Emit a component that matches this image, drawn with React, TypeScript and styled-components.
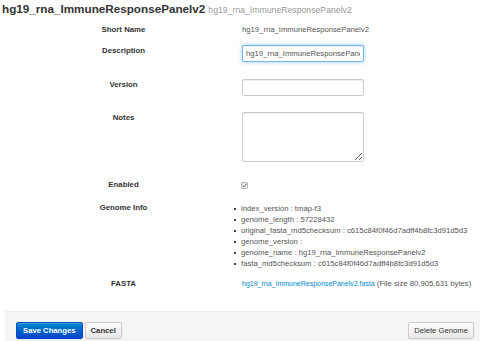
import styled, { createGlobalStyle } from 'styled-components';

const GlobalStyle = createGlobalStyle`
  body {
    margin: 0;
    background: #fff;
    font-family: "Liberation Sans", Arial, sans-serif;
    color: #333;
  }
`;

const Page = styled.div`
  width: 480px;
  height: 341px;
  overflow: hidden;
`;

const Title = styled.h1`
  margin: 0;
  padding: 2px 0 0 2px;
  font-size: 11.7px;
  line-height: 14px;
  font-weight: bold;
  color: #333;
  white-space: nowrap;
`;

const SubTitle = styled.small`
  margin-left: 3px;
  font-size: 8.7px;
  font-weight: normal;
  color: #999;
`;

const Row = styled.div<{ $top: number }>`
  display: grid;
  grid-template-columns: 123px 1fr;
  column-gap: 57px;
  padding-left: 62px;
  margin-top: ${p => p.$top}px;
  align-items: start;
`;

const Label = styled.div`
  margin-top: 1px;
  font-size: 7.8px;
  line-height: 10px;
  font-weight: bold;
  text-align: center;
  color: #333;
`;

const Value = styled.div`
  padding-top: 1px;
  font-size: 7.7px;
  line-height: 10px;
  color: #555;
  white-space: nowrap;
`;

const TextInput = styled.input<{ $focus?: boolean }>`
  box-sizing: border-box;
  display: block;
  width: 122px;
  height: 17px;
  margin: 0;
  padding: 0 3px;
  font-family: inherit;
  font-size: 7.7px;
  color: #555;
  background: #fff;
  border: 1px solid ${p => (p.$focus ? 'rgba(82, 168, 236, 0.8)' : '#ccc')};
  border-radius: 2px;
  box-shadow: ${p =>
    p.$focus
      ? 'inset 0 1px 1px rgba(0,0,0,.075), 0 0 4px rgba(82,168,236,.6)'
      : 'inset 0 1px 1px rgba(0,0,0,.075)'};
  outline: none;
`;

const TextArea = styled.textarea`
  box-sizing: border-box;
  display: block;
  width: 122px;
  height: 50px;
  margin: 0;
  padding: 2px 3px;
  font-family: inherit;
  font-size: 7.7px;
  border: 1px solid #ccc;
  border-radius: 2px;
  box-shadow: inset 0 1px 1px rgba(0,0,0,.075);
  outline: none;
`;

const Check = styled.span`
  display: block;
  width: 5px;
  height: 5px;
  margin: 3px 0 0 -1px;
  border: 1px solid #bbb;
  border-radius: 1px;
  background: #e8e8e8;

  svg {
    display: block;
  }
`;

const InfoList = styled.ul`
  margin: 1px 0 0 -8px;
  padding: 0;
  list-style: none;
`;

const InfoItem = styled.li`
  display: flex;
  align-items: center;
  gap: 5px;
  font-size: 7.7px;
  line-height: 11px;
  color: #555;
  white-space: nowrap;

  &::before {
    content: '';
    width: 2px;
    height: 2px;
    background: #444;
  }
`;

const FileLink = styled.a`
  color: #0088cc;
  font-size: 7px;
  text-decoration: none;
`;

const Actions = styled.div`
  display: flex;
  justify-content: space-between;
  align-items: center;
  margin: 22px 0 0 5px;
  padding: 10px 6px 12px 11px;
  background: #f5f5f5;
  border-top: 1px solid #eee;
`;

const ButtonGroup = styled.div`
  display: flex;
  gap: 2px;
`;

const Button = styled.button<{ $primary?: boolean; $bold?: boolean }>`
  box-sizing: border-box;
  height: 17px;
  padding: 0 ${p => (p.$primary ? 6 : 5)}px;
  font-family: inherit;
  font-size: 7.7px;
  font-weight: ${p => (p.$bold ? 'bold' : 'normal')};
  border-radius: 2px;
  color: ${p => (p.$primary ? '#fff' : '#333')};
  background: ${p =>
    p.$primary
      ? 'linear-gradient(#0088cc, #0044cc)'
      : 'linear-gradient(#ffffff, #e6e6e6)'};
  border: 1px solid ${p => (p.$primary ? '#0044cc' : '#ccc')};
  box-shadow: inset 0 1px 0 rgba(255,255,255,.2), 0 1px 2px rgba(0,0,0,.05);
  cursor: pointer;
`;

const genomeInfo = [
  'index_version : tmap-f3',
  'genome_length : 57228432',
  'original_fasta_md5checksum : c615c84f0f46d7adff4b8fc3d91d5d3',
  'genome_version : ',
  'genome_name : hg19_rna_ImmuneResponsePanelv2',
  'fasta_md5checksum : c615c84f0f46d7adff4b8fc3d91d5d3',
];

export default function App() {
  return (
    <Page>
      <GlobalStyle />
      <Title>
        hg19_rna_ImmuneResponsePanelv2
        <SubTitle>hg19_rna_ImmuneResponsePanelv2</SubTitle>
      </Title>

      <Row $top={7}>
        <Label>Short Name</Label>
        <Value>hg19_rna_ImmuneResponsePanelv2</Value>
      </Row>

      <Row $top={10}>
        <Label>Description</Label>
        <TextInput $focus defaultValue="hg19_rna_ImmuneResponsePanelv2" />
      </Row>

      <Row $top={17}>
        <Label>Version</Label>
        <TextInput />
      </Row>

      <Row $top={16}>
        <Label>Notes</Label>
        <TextArea />
      </Row>

      <Row $top={17}>
        <Label>Enabled</Label>
        <Check>
          <svg width="5" height="5" viewBox="0 0 5 5">
            <path d="M0.6 2.6 L1.9 3.9 L4.4 0.9" fill="none" stroke="#666" strokeWidth="1" />
          </svg>
        </Check>
      </Row>

      <Row $top={12}>
        <Label>Genome Info</Label>
        <InfoList>
          {genomeInfo.map((line, i) => (
            <InfoItem key={i}>{line}</InfoItem>
          ))}
        </InfoList>
      </Row>

      <Row $top={9}>
        <Label>FASTA</Label>
        <Value>
          <FileLink href="#">hg19_rna_ImmuneResponsePanelv2.fasta</FileLink> (File size 80,905,631 bytes)
        </Value>
      </Row>

      <Actions>
        <ButtonGroup>
          <Button $primary $bold>Save Changes</Button>
          <Button $bold>Cancel</Button>
        </ButtonGroup>
        <Button>Delete Genome</Button>
      </Actions>
    </Page>
  );
}
